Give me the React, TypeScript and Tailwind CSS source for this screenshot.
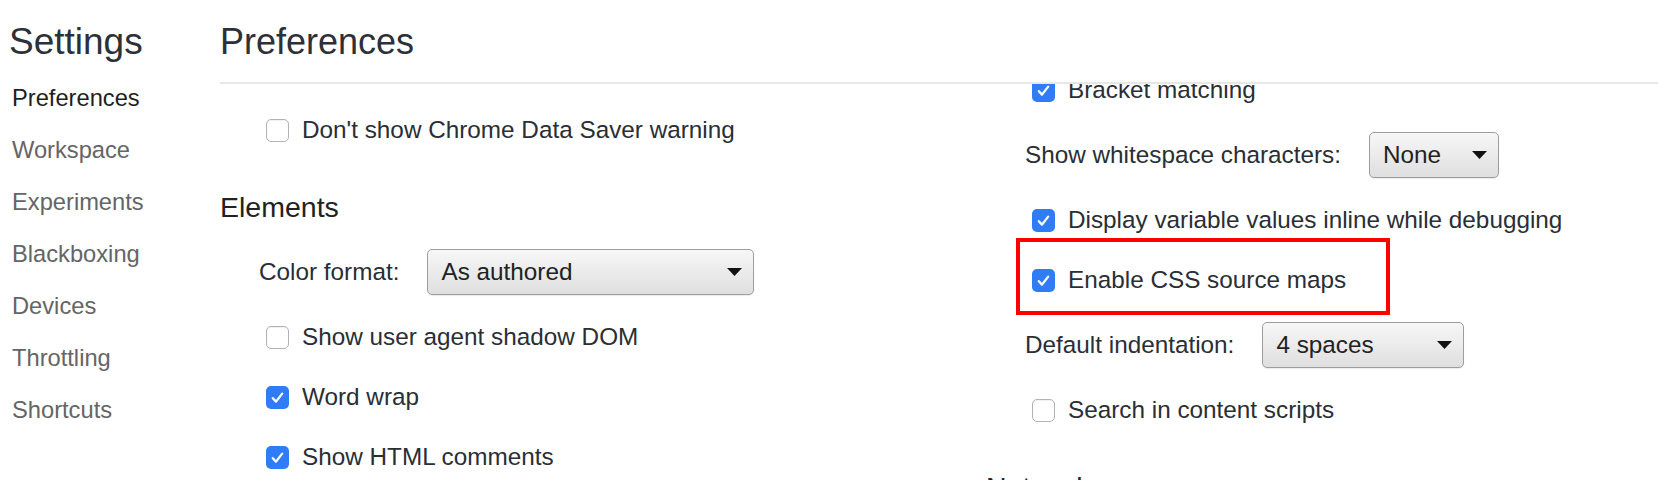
import React from "react";

type Row =
  | { kind: "check"; label: string; checked: boolean; marked?: boolean }
  | { kind: "heading"; label: string }
  | { kind: "select"; label: string; value: string; width: string };

const leftColumn: Row[] = [
  { kind: "check", label: "Don't show Chrome Data Saver warning", checked: false },
  { kind: "heading", label: "Elements" },
  { kind: "select", label: "Color format:", value: "As authored", width: "w-[327px]" },
  { kind: "check", label: "Show user agent shadow DOM", checked: false },
  { kind: "check", label: "Word wrap", checked: true },
  { kind: "check", label: "Show HTML comments", checked: true },
];

const rightColumn: Row[] = [
  { kind: "check", label: "Bracket matching", checked: true },
  { kind: "select", label: "Show whitespace characters:", value: "None", width: "w-[130px]" },
  { kind: "check", label: "Display variable values inline while debugging", checked: true },
  { kind: "check", label: "Enable CSS source maps", checked: true, marked: true },
  { kind: "select", label: "Default indentation:", value: "4 spaces", width: "w-[202px]" },
  { kind: "check", label: "Search in content scripts", checked: false },
  { kind: "heading", label: "Network" },
];

const sections = [
  "Preferences",
  "Workspace",
  "Experiments",
  "Blackboxing",
  "Devices",
  "Throttling",
  "Shortcuts",
];

const Checkbox = ({ checked }: { checked: boolean }) =>
  checked ? (
    <span className="flex h-[23px] w-[23px] shrink-0 items-center justify-center rounded-[5px] bg-[#2f7cf6]">
      <svg width="23" height="23" viewBox="0 0 23 23" fill="none">
        <path
          d="M6.8 12.2 L10 15.6 L16.2 7.6"
          stroke="white"
          strokeWidth="2.3"
          strokeLinecap="round"
          strokeLinejoin="round"
        />
      </svg>
    </span>
  ) : (
    <span className="h-[23px] w-[23px] shrink-0 rounded-[5px] border border-[#b3b3b3] bg-white shadow-[inset_0_1px_1px_rgba(0,0,0,0.06)]" />
  );

const SettingRow = ({ row }: { row: Row }) => {
  if (row.kind === "heading") {
    return (
      <div className="pt-[31px] pb-[14px] text-[28.5px] leading-[32px] text-[#222]">
        {row.label}
      </div>
    );
  }

  if (row.kind === "select") {
    return (
      <div className="flex h-[70px] items-center gap-[28px] pl-[39px]">
        <span className="text-[24.3px] leading-[28px]">{row.label}</span>
        <div
          className={`${row.width} flex h-[46px] items-center justify-between rounded-[5px] border border-[#9d9d9d] bg-linear-to-b from-[#f7f7f7] to-[#dfdfdf] pl-[13px] pr-[11px] shadow-[0_1px_1px_rgba(0,0,0,0.08)]`}
        >
          <span className="text-[24.3px] leading-[28px] text-[#222]">{row.value}</span>
          <svg width="15" height="8" viewBox="0 0 15 8">
            <path d="M0 0 H15 L7.5 8 Z" fill="#111" />
          </svg>
        </div>
      </div>
    );
  }

  return (
    <div className="relative flex h-[60px] items-center gap-[13px] pl-[46px]">
      <Checkbox checked={row.checked} />
      <span className="text-[24.3px] leading-[28px]">{row.label}</span>
      {row.marked && (
        <div className="pointer-events-none absolute left-[30px] -top-[12px] h-[77px] w-[374px] border-[4px] border-[#ff0000]" />
      )}
    </div>
  );
};

export default function App() {
  return (
    <div className="flex h-[480px] w-full overflow-hidden bg-white font-['Liberation_Sans',Arial,sans-serif] text-[#2a2e35]">
      {/* Sidebar */}
      <aside className="w-[220px] shrink-0 pl-[9px]">
        <h1 className="pt-[24px] text-[37px] leading-[36px] text-[#2d3036]">Settings</h1>
        <nav className="mt-[12px] flex flex-col pl-[3px]">
          {sections.map((name, i) => (
            <span
              key={name}
              className={`text-[23.7px] leading-[52px] ${i === 0 ? "text-[#1f1f1f]" : "text-[#656565]"}`}
            >
              {name}
            </span>
          ))}
        </nav>
      </aside>

      {/* Main panel */}
      <main className="flex min-w-0 flex-1 flex-col">
        <header className="h-[84px] shrink-0 border-b-2 border-[#e7e7e7]">
          <h2 className="pt-[24px] text-[36px] leading-[36px] text-[#2d3036]">Preferences</h2>
        </header>

        <div className="flex flex-1 overflow-hidden">
          <div className="mt-[16px] w-[766px] shrink-0">
            {leftColumn.map((row) => (
              <SettingRow key={row.label} row={row} />
            ))}
          </div>
          <div className="-mt-[24px] flex-1">
            {rightColumn.map((row) => (
              <SettingRow key={row.label} row={row} />
            ))}
          </div>
        </div>
      </main>
    </div>
  );
}
